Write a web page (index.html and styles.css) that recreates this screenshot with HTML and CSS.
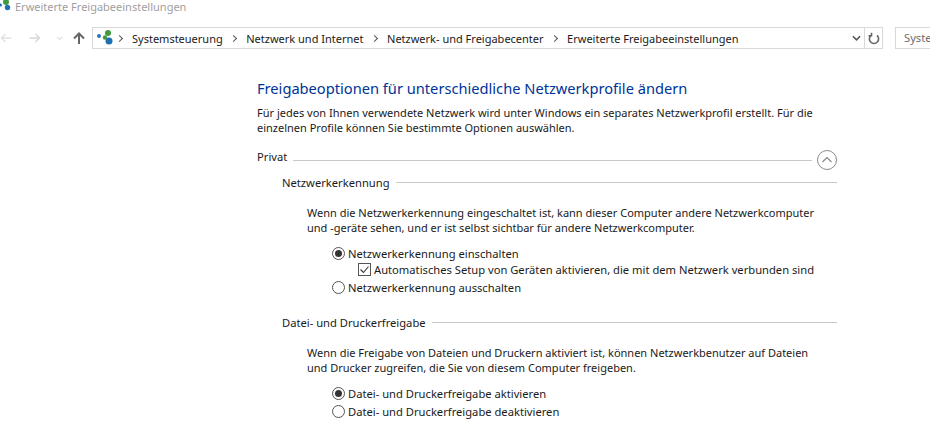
FILE: index.html
```html
<!DOCTYPE html>
<html lang="de">
<head>
    <meta charset="UTF-8">
    <title>Erweiterte Freigabeeinstellungen</title>
    <link rel="stylesheet" href="styles.css">
</head>
<body>
    <div class="titlebar">
        <svg class="title-icon" width="16" height="16" viewBox="0 0 16 16">
            <circle cx="0.500" cy="5" r="1.500" fill="#1f6fb5"/>
            <circle cx="6" cy="2" r="3" fill="#3f9a3c"/>
            <circle cx="7.500" cy="7.500" r="2.700" fill="#1f6fb5"/>
        </svg>
        <span>Erweiterte Freigabeeinstellungen</span>
    </div>

    <div class="navbar">
        <div class="nav-buttons">
            <svg width="12" height="12" viewBox="0 0 12 12" class="nav-back"><path d="M11.500 6H1.500M5.500 2L1.500 6l4 4" fill="none" stroke="#e2e2e2" stroke-width="1.500"/></svg>
            <svg width="12" height="12" viewBox="0 0 12 12" class="nav-forward"><path d="M0.500 6h10M6.500 2l4 4-4 4" fill="none" stroke="#d8d8d8" stroke-width="1.500"/></svg>
            <svg width="7" height="5" viewBox="0 0 7 5" class="nav-down"><path d="M1 1l2.500 2.500L6 1" fill="none" stroke="#e0e0e0" stroke-width="1.200"/></svg>
            <svg width="12" height="12" viewBox="0 0 12 12" class="nav-up"><path d="M6 12V2M1 6.500L6 1.500l5 5" fill="none" stroke="#666" stroke-width="2"/></svg>
        </div>
        <div class="address">
            <svg class="net-icon" width="18" height="16" viewBox="0 0 18 16">
                <circle cx="3" cy="6" r="2" fill="#2a76bd"/>
                <circle cx="12" cy="3" r="3" fill="#3f9a3c"/>
                <circle cx="13" cy="11" r="3.500" fill="#1f6fb5"/>
                <circle cx="9" cy="7.500" r="2.200" fill="#3f9a3c"/>
            </svg>
            <span class="crumb-sep"></span><span class="crumb">Systemsteuerung</span>
            <span class="crumb-sep"></span><span class="crumb">Netzwerk und Internet</span>
            <span class="crumb-sep"></span><span class="crumb">Netzwerk- und Freigabecenter</span>
            <span class="crumb-sep"></span><span class="crumb">Erweiterte Freigabeeinstellungen</span>
            <svg class="addr-down" width="9" height="7" viewBox="0 0 10 7"><path d="M1 1l4 4 4-4" fill="none" stroke="#555" stroke-width="1.700"/></svg>
            <div class="refresh">
                <svg width="12" height="13" viewBox="0 0 12 13"><path d="M3 3.400a4.600 4.600 0 1 0 6 0M3.500 0.800v3h-3" fill="none" stroke="#666" stroke-width="1.600"/></svg>
            </div>
        </div>
        <div class="search">Syste</div>
    </div>

    <div class="content">
        <h1>Freigabeoptionen für unterschiedliche Netzwerkprofile ändern</h1>
        <p class="intro">Für jedes von Ihnen verwendete Netzwerk wird unter Windows ein separates Netzwerkprofil erstellt. Für die einzelnen Profile können Sie bestimmte Optionen auswählen.</p>

        <div class="profile-head">
            <span class="profile-name">Privat</span>
            <span class="rule"></span>
            <span class="collapse">
                <svg width="20" height="20" viewBox="0 0 20 20"><circle cx="10" cy="10" r="9.500" fill="none" stroke="#8a8a8a"/><path d="M5.500 12L10 7.500l4.500 4.500" fill="none" stroke="#8a8a8a" stroke-width="1.200"/></svg>
            </span>
        </div>

        <div class="group">
            <div class="group-head"><span>Netzwerkerkennung</span><span class="rule"></span></div>
            <div class="group-body">
                <p>Wenn die Netzwerkerkennung eingeschaltet ist, kann dieser Computer andere Netzwerkcomputer und -geräte sehen, und er ist selbst sichtbar für andere Netzwerkcomputer.</p>
                <div class="options">
                    <div class="option"><span class="radio checked"></span>Netzwerkerkennung einschalten</div>
                    <div class="option sub">
                        <svg class="check" width="13" height="13" viewBox="0 0 13 13"><rect x="0.500" y="0.500" width="12" height="12" fill="#fff" stroke="#555"/><path d="M2.500 6.500l3 3 5-6" fill="none" stroke="#333" stroke-width="1.100"/></svg>
                        Automatisches Setup von Geräten aktivieren, die mit dem Netzwerk verbunden sind
                    </div>
                    <div class="option"><span class="radio"></span>Netzwerkerkennung ausschalten</div>
                </div>
            </div>
        </div>

        <div class="group">
            <div class="group-head"><span>Datei- und Druckerfreigabe</span><span class="rule"></span></div>
            <div class="group-body">
                <p>Wenn die Freigabe von Dateien und Druckern aktiviert ist, können Netzwerkbenutzer auf Dateien und Drucker zugreifen, die Sie von diesem Computer freigeben.</p>
                <div class="options">
                    <div class="option"><span class="radio checked"></span>Datei- und Druckerfreigabe aktivieren</div>
                    <div class="option"><span class="radio"></span>Datei- und Druckerfreigabe deaktivieren</div>
                </div>
            </div>
        </div>
    </div>
</body>
</html>
```

FILE: styles.css
```css
html, body {
    margin: 0;
    padding: 0;
    height: 100%;
    overflow: hidden;
}
body {
    background-color: #fff;
    color: #1a1a1a;
    font-family: "Noto Sans", "Open Sans", sans-serif;
    font-size: 11.2px;
    line-height: 15px;
}
.titlebar {
    height: 27px;
    padding-left: 15px;
    color: #a0a0a0;
    font-size: 11px;
    line-height: 13px;
    position: relative;
}
.titlebar span {
    display: block;
}
.title-icon {
    position: absolute;
    left: 0;
    top: 0;
}
.navbar {
    display: flex;
    height: 22px;
}
.nav-buttons {
    width: 92px;
    flex-shrink: 0;
    display: flex;
    align-items: center;
}
.nav-forward {
    margin-left: 17px;
}
.nav-down {
    margin-left: 15px;
}
.nav-up {
    margin-left: 10px;
}
.address {
    width: 791px;
    flex-shrink: 0;
    display: flex;
    align-items: center;
    border: 1px solid #d9d9d9;
    box-sizing: border-box;
    padding-left: 3px;
    font-size: 11px;
}
.net-icon {
    margin-right: 3px;
}
.crumb {
    margin-right: 8.500px;
}
.crumb-sep {
    width: 4px;
    height: 4px;
    margin-right: 10px;
    border-top: 1px solid #555;
    border-right: 1px solid #555;
    transform: rotate(45deg);
}
.addr-down {
    margin-left: auto;
    margin-right: 3px;
}
.refresh {
    width: 17px;
    height: 100%;
    border-left: 1px solid #d9d9d9;
    display: flex;
    align-items: center;
    justify-content: center;
}
.search {
    width: 60px;
    flex-shrink: 0;
    margin-left: 12px;
    border: 1px solid #d9d9d9;
    padding-left: 8px;
    color: #6d6d6d;
    line-height: 20px;
}
.content {
    width: 580px;
    margin-left: 257px;
    padding-top: 29px;
}
h1 {
    margin: 0;
    font-size: 14.650px;
    line-height: 20px;
    font-weight: 400;
    color: #003399;
}
.intro {
    margin: 7px 0 0;
    font-size: 11px;
}
.profile-head {
    display: flex;
    align-items: center;
    height: 20px;
    margin-top: 15px;
}
.profile-name {
    padding-bottom: 8px;
}
.rule {
    flex-grow: 1;
    height: 1px;
    background-color: #c8c8c8;
    margin-left: 6px;
}
.collapse {
    display: flex;
    margin-left: 5px;
}
.group {
    padding-left: 25px;
    margin-top: 5px;
}
.group + .group {
    margin-top: 19px;
}
.group-head {
    display: flex;
    align-items: center;
    height: 15px;
}
.group-body {
    padding-left: 25px;
    padding-top: 15px;
}
.group-body p {
    margin: 0;
    max-width: 518px;
    font-size: 11px;
}
.options {
    margin-top: 9px;
    padding-left: 25px;
}
.option {
    display: flex;
    align-items: center;
    height: 18px;
}
.option.sub {
    height: 16px;
    margin: -1px 0 1px;
    padding-left: 26px;
}
.radio {
    width: 11px;
    height: 11px;
    border: 1px solid #555;
    border-radius: 50%;
    margin-right: 3px;
    flex-shrink: 0;
    position: relative;
    background-color: #fff;
}
.radio.checked::after {
    content: "";
    position: absolute;
    left: 2px;
    top: 2px;
    width: 7px;
    height: 7px;
    border-radius: 50%;
    background-color: #333;
}
.check {
    margin-right: 3px;
    flex-shrink: 0;
}
```
